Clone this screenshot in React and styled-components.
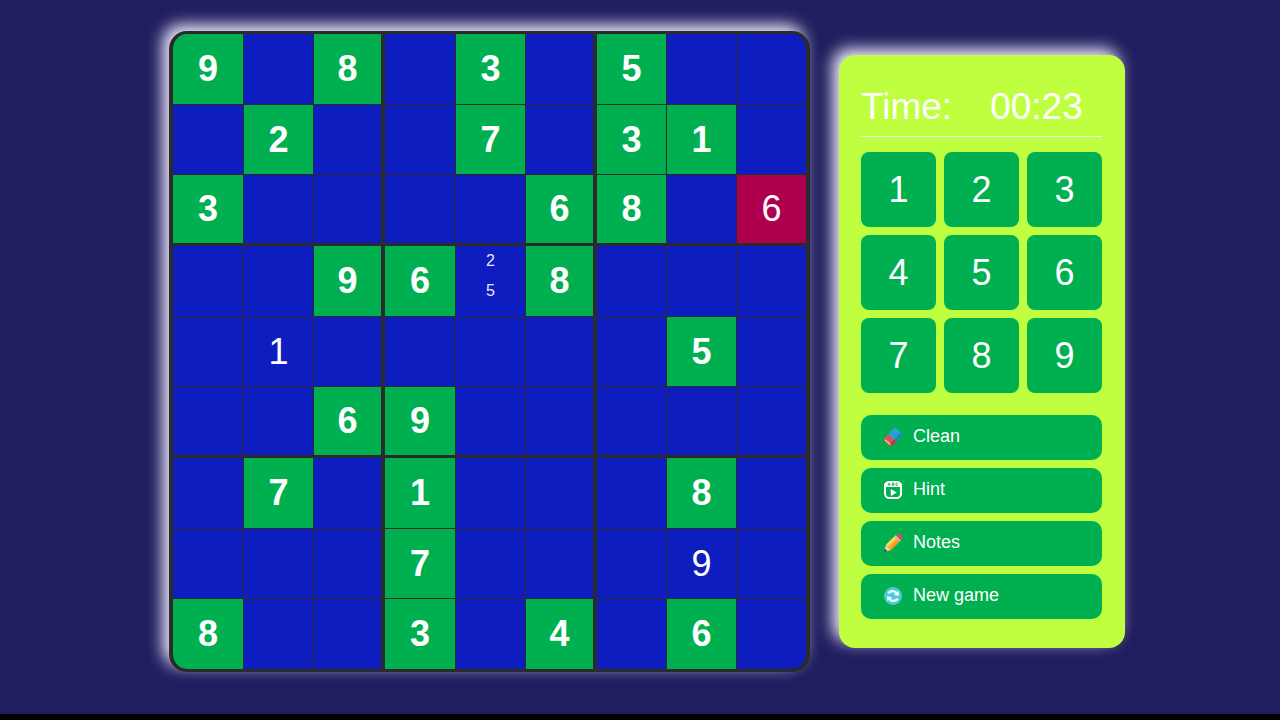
import React from 'react';
import styled, { createGlobalStyle, css } from 'styled-components';

const GlobalStyle = createGlobalStyle`
  *, *::before, *::after { box-sizing: border-box; }
  body {
    margin: 0;
    background: #201e5f;
    color: #fff;
    font-family: 'Liberation Sans', Arial, sans-serif;
  }
  button { font: inherit; color: inherit; border: 0; padding: 0; cursor: pointer; }
`;

const line = '#2b2b2b';
const glow = '-6px -6px 16px #f4f0ff';

const Page = styled.div`
  min-height: 100vh;
  display: flex;
  flex-direction: column;
`;

const Game = styled.main`
  flex: 1;
  display: flex;
  justify-content: center;
  align-items: flex-start;
  gap: 29px;
  padding: 31px 16px 40px 30px;
`;

const BottomBar = styled.footer`
  height: 6px;
  background: #000;
`;

const Board = styled.section`
  flex: 1 1 auto;
  max-width: 641px;
  aspect-ratio: 1;
  display: grid;
  grid-template-columns: 71fr 70fr 71fr 71fr 70fr 71fr 70fr 70fr 69fr;
  grid-template-rows: 71fr 70fr 71fr 71fr 70fr 71fr 71fr 70fr 70fr;
  border: solid ${line};
  border-width: 3px 4px;
  border-radius: 18px;
  background: ${line};
  box-shadow: ${glow};
  overflow: hidden;
`;

const fills = { empty: '#0d1dc0', entry: '#0d1dc0', given: '#00af50', error: '#af004f' };

const Cell = styled.button`
  min-width: 0;
  min-height: 0;
  display: flex;
  justify-content: center;
  align-items: center;
  background: ${(p) => fills[p.$kind]};
  border: 0 solid ${line};
  border-right-width: ${(p) => (p.$col === 8 ? 0 : p.$col % 3 === 2 ? 4 : 1)}px;
  border-bottom-width: ${(p) => (p.$row === 8 ? 0 : p.$row % 3 === 2 ? 3 : 1)}px;
  font-size: 36px;
  font-weight: ${(p) => (p.$kind === 'given' ? 700 : 400)};
  ${(p) => p.$notes && css`
    flex-direction: column;
    justify-content: flex-start;
    font-size: 16px;
    line-height: 30px;
    color: #e6e6fa;
  `}
`;

const Panel = styled.aside`
  flex: 0 0 286px;
  margin-top: 24px;
  padding: 24px 23px 29px 22px;
  border-radius: 16px;
  background: #bfff40;
  box-shadow: ${glow};
`;

const Timer = styled.div`
  display: flex;
  gap: 38px;
  padding: 4px 0 6px;
  border-bottom: 1px solid #f0f0f0;
  font-size: 37px;
  line-height: 47px;
`;

const Keypad = styled.div`
  display: grid;
  grid-template-columns: repeat(3, 1fr);
  gap: 8px;
  margin: 15px 0 22px;
`;

const Key = styled.button`
  height: 75px;
  border-radius: 8px;
  background: #00af50;
  font-size: 36px;
`;

const Actions = styled.div`
  display: grid;
  gap: 8px;
`;

const Action = styled.button`
  height: 45px;
  display: flex;
  align-items: center;
  gap: 11px;
  padding: 0 0 2px 23px;
  border-radius: 10px;
  background: #00af50;
  font-size: 18px;
  svg { width: 18px; height: 18px; }
`;

const EraserIcon = () => (
  <svg viewBox="0 0 18 18" aria-hidden="true">
    <g transform="rotate(-47 9 9)">
      <rect x="0" y="3.6" width="10" height="10.8" rx="2" fill="#dc5349" />
      <path d="M7.6 3.6H15.6a2 2 0 0 1 2 2v6.8a2 2 0 0 1-2 2H7.6z" fill="#2b9fd8" />
      <path d="M7.6 11.4h10v1a2 2 0 0 1-2 2h-8z" fill="#2585b8" />
      <path d="M7.6 11.4H0v1a2 2 0 0 0 2 2h5.6z" fill="#b93b3d" />
      <path d="M1.5 5.2v7.6" stroke="#fbe3df" strokeWidth="1.4" strokeDasharray="1.3 .5" />
    </g>
  </svg>
);

const HintIcon = () => (
  <svg viewBox="0 0 18 18" fill="none" aria-hidden="true">
    <rect x="1" y="1" width="16" height="16" rx="4.5" stroke="#fff" strokeWidth="2" />
    <path d="M0 6V5a5 5 0 0 1 5-5h8a5 5 0 0 1 5 5v1z" fill="#fff" />
    <path
      d="M4 4.6 5.1 2l1.1 2.6M4.4 3.8h1.4M8.2 2v2.4h1.7V2zM8.2 3.2h1.7M13.8 2.2h-1.8v2.2h1.8"
      stroke="#00af50"
      strokeWidth=".8"
    />
    <path d="M6.8 8v7l6-3.5z" fill="#fff" />
  </svg>
);

const PencilIcon = () => (
  <svg viewBox="0 0 18 18" aria-hidden="true">
    <path d="M0 18l2-7.2 5.2 5.2z" fill="#f5cfa6" />
    <path d="M0 18l.9-3.2 2.3 2.3z" fill="#3a3030" />
    <path d="M2 10.8 10.4 2.4l5.2 5.2L7.2 16z" fill="#fdb52c" />
    <path d="M2 10.8 10.4 2.4l1.8 1.8-8.4 8.4z" fill="#ffd768" />
    <path d="M5.6 14.4 14 6l1.6 1.6L7.2 16z" fill="#f0931f" />
    <path d="M10.4 2.4l1.3-1.3 5.2 5.2-1.3 1.3z" fill="#d6c3c4" />
    <path d="M11.7 1.1C13.2-.4 15.4-.3 16.9 1.1s1.5 3.7 0 5.2z" fill="#ef4458" />
  </svg>
);

const RefreshIcon = () => (
  <svg viewBox="0 0 18 18" fill="none" aria-hidden="true">
    <circle cx="9" cy="9" r="9" fill="#4dcbdd" />
    <path d="M4.2 6.4C6.2 3.4 10.6 3.2 12.8 6.2" stroke="#fff" strokeWidth="2.2" />
    <path d="M13.8 11.6c-2 3-6.4 3.2-8.6.2" stroke="#fff" strokeWidth="2.2" />
    <path d="M14.8 4v5l-5-1.4zM3.2 14V9l5 1.4z" fill="#fff" />
  </svg>
);

const givens = [
  '9.8.3.5..',
  '.2..7.31.',
  '3....68..',
  '..96.8...',
  '.......5.',
  '..69.....',
  '.7.1...8.',
  '...7.....',
  '8..3.4.6.',
];
const entries = { '2-8': ['6', 'error'], '4-1': ['1', 'entry'], '7-7': ['9', 'entry'] };
const notes = { '3-4': ['2', '5'] };

const actions = [
  ['Clean', EraserIcon],
  ['Hint', HintIcon],
  ['Notes', PencilIcon],
  ['New game', RefreshIcon],
];

function SudokuCell({ row, col }) {
  const key = `${row}-${col}`;
  const given = givens[row][col];
  const [value, kind] = given !== '.' ? [given, 'given'] : entries[key] || ['', 'empty'];
  return (
    <Cell
      type="button"
      $row={row}
      $col={col}
      $kind={kind}
      $notes={Boolean(notes[key])}
      aria-label={`Row ${row + 1}, column ${col + 1}`}
    >
      {notes[key] ? notes[key].map((n) => <span key={n}>{n}</span>) : value}
    </Cell>
  );
}

export default function App() {
  return (
    <Page>
      <GlobalStyle />
      <Game>
        <Board aria-label="Board">
          {givens.map((r, row) =>
            [...r].map((_, col) => <SudokuCell key={`${row}-${col}`} row={row} col={col} />)
          )}
        </Board>
        <Panel>
          <Timer>
            <span>Time:</span>
            <span>00:23</span>
          </Timer>
          <Keypad>
            {[1, 2, 3, 4, 5, 6, 7, 8, 9].map((n) => (
              <Key type="button" key={n}>{n}</Key>
            ))}
          </Keypad>
          <Actions>
            {actions.map(([label, Icon]) => (
              <Action type="button" key={label}>
                <Icon />
                {label}
              </Action>
            ))}
          </Actions>
        </Panel>
      </Game>
      <BottomBar />
    </Page>
  );
}
